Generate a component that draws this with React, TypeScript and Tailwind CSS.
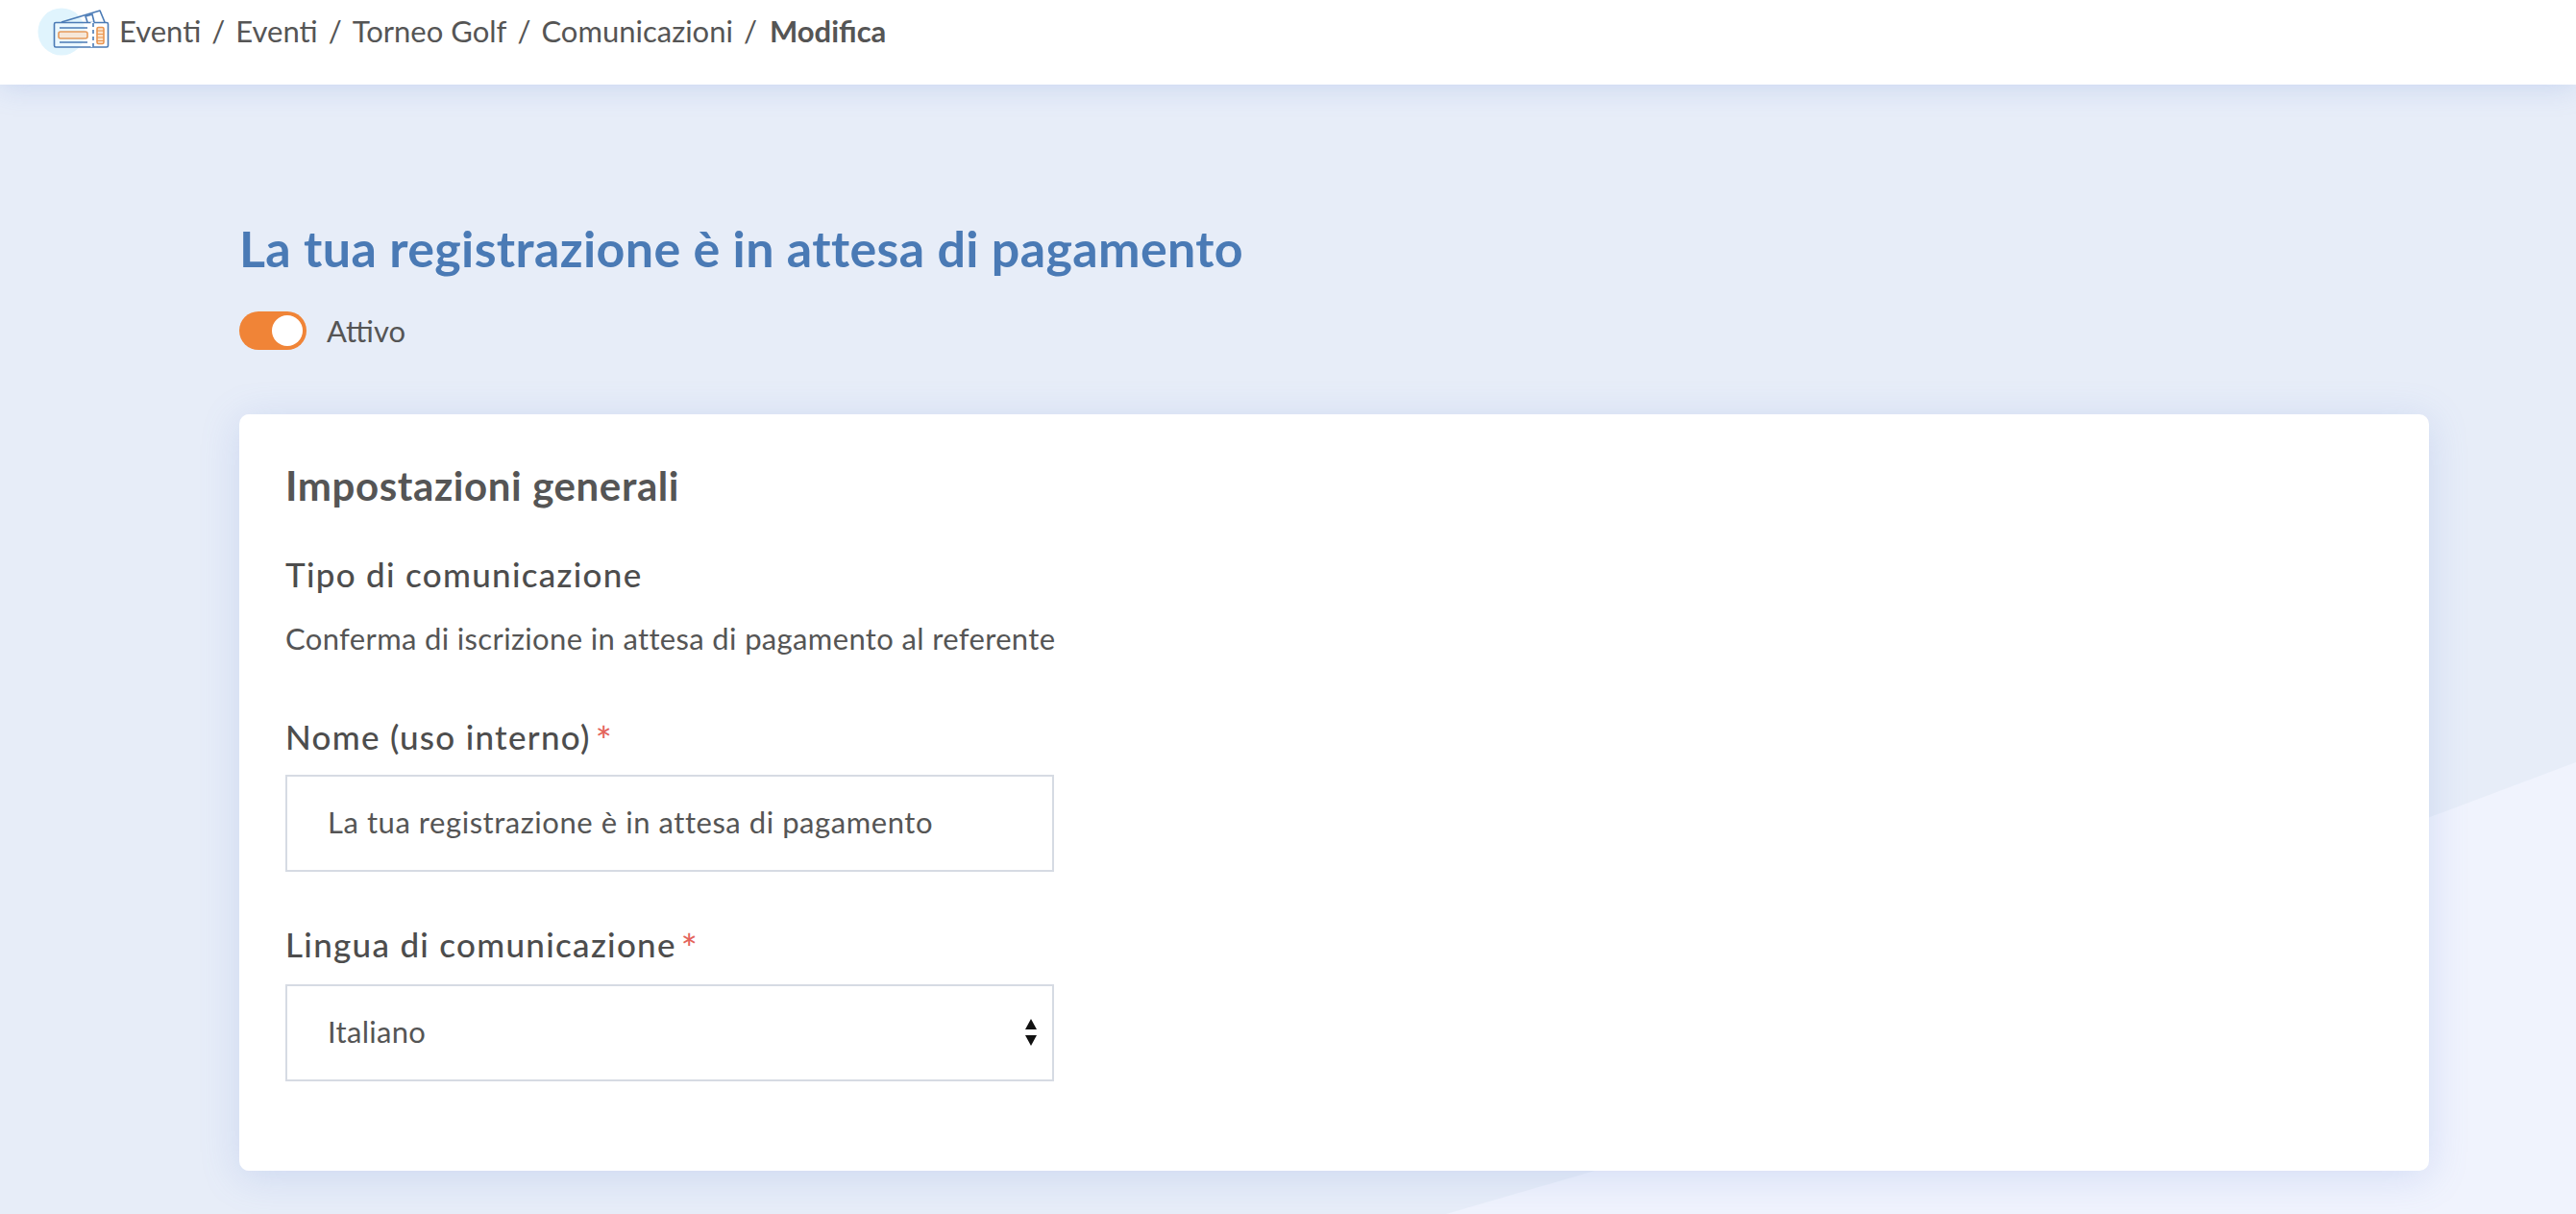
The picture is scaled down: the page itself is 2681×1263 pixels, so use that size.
const font = "font-['Lato','Noto_Sans',sans-serif]";

function TicketIcon() {
  return (
    <svg width="76" height="52" viewBox="0 0 76 52" fill="none" className="mr-[10px] shrink-0">
      <circle cx="26" cy="27" r="24.5" fill="#e0f4fd" />
      <path d="M26 17 L66 5 L71 17" stroke="#4a7ab5" strokeWidth="1.6" strokeLinejoin="round" />
      <path d="M53 17 L51 11 L58 9 L60 17" stroke="#4a7ab5" strokeWidth="1.6" />
      <rect x="18.5" y="17.5" width="56" height="25.5" rx="1.5" fill="#fff" fillOpacity="0.35" stroke="#4a7ab5" strokeWidth="1.6" />
      <path d="M58 17 V43" stroke="#fff" strokeWidth="3" />
      <path d="M59 18 V43" stroke="#4a7ab5" strokeWidth="1.6" strokeDasharray="4 3" />
      <path d="M24 23 H53 M24 38 H53" stroke="#4a7ab5" strokeWidth="1.6" />
      <rect x="23" y="27" width="30" height="7" rx="2" fill="#f6e7d8" stroke="#e69a5b" strokeWidth="1.6" />
      <rect x="63" y="22.5" width="7" height="17" rx="1.5" fill="#fbe3cc" stroke="#ea9550" strokeWidth="1.6" />
      <path d="M63 26 H70 M63 29.5 H70 M63 33 H70 M63 36.5 H70" stroke="#ea9550" strokeWidth="1.2" />
    </svg>
  );
}

function Breadcrumb() {
  const items = ["Eventi", "Eventi", "Torneo Golf", "Comunicazioni"];
  return (
    <div className="flex items-start pl-[38px] pt-[6px] text-[31px] leading-[52px] text-[#555]">
      <TicketIcon />
      {items.map((item, i) => (
        <span key={i} className="whitespace-pre">
          {item}
          <span className="mx-[11px]">/</span>
        </span>
      ))}
      <span className="ml-[2px] font-bold">Modifica</span>
    </div>
  );
}

function Label({ text }: { text: string }) {
  return (
    <label className="flex h-[40px] items-center text-[35px] leading-[40px] font-medium tracking-[1.3px] text-[#4d4d4d]">
      {text}
      <span className="ml-[5px] mt-[7px] text-[40px] leading-[40px] text-[#e4645c]">*</span>
    </label>
  );
}

export default function App() {
  return (
    <div className={`relative h-[1263px] overflow-hidden bg-[#e7edf8] ${font}`}>
      <svg className="absolute inset-0" width="2681" height="1263" viewBox="0 0 2681 1263">
        <path d="M1505 1263 L1660 1218 L2529 850 L2681 793 V1263 Z" fill="#f0f3fd" />
      </svg>

      <header className="relative h-[88px] bg-white shadow-[0_2px_28px_rgba(120,150,220,0.28)]">
        <Breadcrumb />
      </header>

      <main className="relative pl-[249px] pr-[153px] pt-[140px]">
        <h1 className="text-[52px] leading-[60px] font-bold tracking-[0.35px] text-[#4a7ab5]">
          La tua registrazione è in attesa di pagamento
        </h1>

        <div className="mt-[36px] flex items-center gap-[21px]">
          <div className="flex h-[40px] w-[70px] items-center justify-end rounded-full bg-[#f08437] pr-[4px]">
            <div className="h-[32px] w-[32px] rounded-full bg-white" />
          </div>
          <span className="text-[31px] leading-[40px] text-[#555]">Attivo</span>
        </div>

        <section className="mt-[67px] h-[787px] rounded-[10px] bg-white px-[48px] pt-[50px] shadow-[0_6px_40px_rgba(110,140,220,0.22)]">
          <h2 className="text-[42px] leading-[48px] font-bold tracking-[0.6px] text-[#555]">Impostazioni generali</h2>

          <h3 className="mt-[48px] text-[35px] leading-[40px] font-medium tracking-[1.3px] text-[#4d4d4d]">
            Tipo di comunicazione
          </h3>
          <p className="mt-[28px] text-[31px] leading-[38px] tracking-[0.35px] text-[#555]">
            Conferma di iscrizione in attesa di pagamento al referente
          </p>

          <div className="mt-[63px] w-[800px]">
            <Label text="Nome (uso interno)" />
            <input
              readOnly
              value="La tua registrazione è in attesa di pagamento"
              className="mt-[20px] h-[101px] w-full border-2 border-[#d6dbe3] bg-white px-[42px] pb-[3px] text-[31px] tracking-[0.55px] text-[#555] outline-none"
            />
          </div>

          <div className="mt-[55px] w-[800px]">
            <Label text="Lingua di comunicazione" />
            <div className="relative mt-[22px]">
              <select
                defaultValue="it"
                className="h-[101px] w-full appearance-none rounded-none border-2 border-[#d6dbe3] bg-white px-[42px] pb-[3px] text-[31px] tracking-[0.3px] text-[#555] outline-none"
              >
                <option value="it">Italiano</option>
              </select>
              <svg width="14" height="28" viewBox="0 0 14 28" className="absolute right-[17px] top-[36px]">
                <path d="M7 0 L13 11 H1 Z M1 17 H13 L7 28 Z" fill="#111" />
              </svg>
            </div>
          </div>
        </section>
      </main>
    </div>
  );
}
